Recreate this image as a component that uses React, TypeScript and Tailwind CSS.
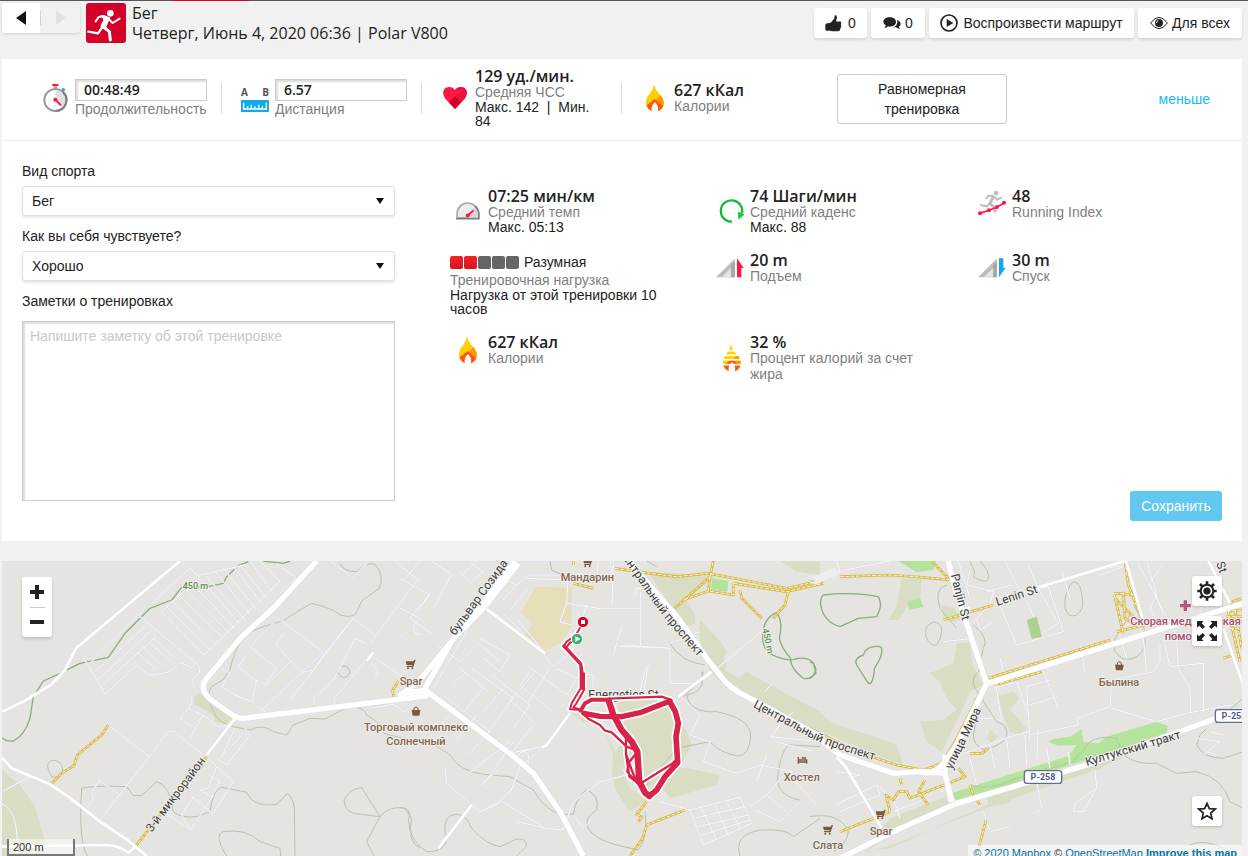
import type { ReactNode } from 'react'

type IconProps = { className?: string }

function RunnerLogo() {
  return (
    <svg viewBox="0 0 120 120" className="size-10 shrink-0 rounded-[3px] bg-[#d30029]" aria-hidden="true">
      <circle cx="73" cy="31" r="10" fill="#fff" />
      <path d="M44 36L60 38L73 44L66 60L60 74L48 78L43 70L52 50Z" fill="#fff" />
      <g fill="none" stroke="#fff" strokeLinecap="round" strokeLinejoin="round">
        <path d="M54 39L38 42L29 55" strokeWidth="6" />
        <path d="M66 46L80 60L101 47" strokeWidth="6" />
        <path d="M53 72L70 86L73 111" strokeWidth="9" />
        <path d="M48 74L36 91L7 86" strokeWidth="7" />
      </g>
    </svg>
  )
}

function ThumbIcon({ className }: IconProps) {
  return (
    <svg viewBox="0 0 54 54" className={className} fill="currentColor" aria-hidden="true">
      <path d="M18 25L29 12L31 1Q38 -1 38 8L35 21H49Q54 24 50 29Q54 33 50 37Q52 42 48 44Q49 51 42 52H22L14 49Q1 52 1 45V32Q1 26 8 26Z" />
    </svg>
  )
}

function CommentsIcon({ className }: IconProps) {
  return (
    <svg viewBox="0 0 54 36" className={className} fill="currentColor" aria-hidden="true">
      <path d="M20 1C31 1 39 7 39 15C39 23 31 29 20 29L15 28Q11 33 4 33Q8 29 8 25Q1 21 1 15C1 7 9 1 20 1Z" />
      <path d="M42 8Q53 13 53 21Q53 26 48 29Q48 33 52 35Q44 36 39 31L30 31Q43 27 43 15Q43 11 42 8Z" />
    </svg>
  )
}

function StopwatchIcon() {
  return (
    <svg viewBox="0 0 78 90" className="h-[30px] w-[26px]" aria-hidden="true">
      <circle cx="40" cy="51" r="33" fill="#fff" stroke="#9c9c9c" strokeWidth="6" />
      <path d="M40 51V21A30 30 0 0 1 61 72Z" fill="#e1e1e1" />
      <path d="M63 27A33 33 0 0 1 40 84" fill="none" stroke="#7d7d7d" strokeWidth="6" />
      <rect x="31" y="3" width="18" height="6" fill="#ff1744" />
      <rect x="35" y="9" width="10" height="7" fill="#a8a8a8" />
      <circle cx="64" cy="20" r="5" fill="#14a9e8" />
      <circle cx="40" cy="50" r="6" fill="#ff1744" />
      <path d="M40 50L57 67" stroke="#ff1744" strokeWidth="6" />
    </svg>
  )
}

function DistanceIcon() {
  return (
    <div className="flex w-7 flex-col">
      <div className="flex justify-between font-['Open_Sans',sans-serif] text-[10px] leading-4 font-bold text-[#555]">
        <span>A</span>
        <span>B</span>
      </div>
      <svg viewBox="0 0 84 36" className="h-3 w-7" aria-hidden="true">
        <rect width="84" height="36" rx="2" fill="#14a9e8" />
        <path d="M8 8V27H76V8M20 26V19M31 26V14M42 26V19M53 26V14M64 26V19" fill="none" stroke="#fff" strokeWidth="4" />
      </svg>
    </div>
  )
}

function HeartIcon() {
  return (
    <svg viewBox="0 0 72 72" className="size-6" aria-hidden="true">
      <path d="M36 69L7 38C-6 20 2 4 18 3Q30 3 36 13Q42 3 54 3C70 4 78 20 65 38Z" fill="#ff1744" />
      <path d="M36 13Q42 3 54 3C70 4 78 20 65 38L54 50L36 31L56 13Z" fill="#e5173c" />
      <path d="M17 49L36 31L54 50L36 69Z" fill="#cf0025" />
    </svg>
  )
}

function FlameIcon({ striped = false }: { striped?: boolean }) {
  return (
    <svg viewBox="0 0 60 86" className="h-7 w-5" aria-hidden="true">
      <path d="M27 1Q31 19 46 34C63 52 60 72 40 84Q46 68 30 54Q15 68 20 84C-3 72 -2 50 12 32Q25 16 27 1Z" fill="#ffd000" />
      <path d="M46 34C63 52 60 72 40 84Q46 68 30 54L22 60Z" fill="#ff9a00" />
      <path d="M4 66L29 46L55 68Q50 79 39 84Q43 67 30 55Q16 67 20 84Q8 78 4 66Z" fill="#ff5412" />
      {striped && (
        <g fill="#fff">
          <rect y="18" width="60" height="5" />
          <rect y="32" width="60" height="5" />
          <rect y="46" width="60" height="5" />
          <rect y="61" width="60" height="5" />
        </g>
      )}
    </svg>
  )
}

function PaceIcon() {
  return (
    <svg viewBox="0 0 78 56" className="h-[18px] w-[26px]" aria-hidden="true">
      <path d="M5 49V36A33 33 0 0 1 71 36V49Z" fill="#ececec" stroke="#a6a6a6" strokeWidth="5" />
      <path d="M38 42L61 14Q73 25 71 49H38Z" fill="#d6d6d6" />
      <path d="M61 13Q73 24 73 36V52H2" fill="none" stroke="#7d7d7d" strokeWidth="5" />
      <circle cx="38" cy="42" r="6" fill="#ff1744" />
      <path d="M38 42L56 26" stroke="#ff1744" strokeWidth="6" />
    </svg>
  )
}

function CadenceIcon() {
  return (
    <svg viewBox="0 0 80 78" className="size-[26px]" aria-hidden="true">
      <path d="M40 72A33 33 0 1 1 71 45" fill="none" stroke="#12bd35" strokeWidth="7" />
      <path d="M58 41L79 49L60 66Z" fill="#19c541" />
    </svg>
  )
}

function RunningIndexIcon() {
  return (
    <svg viewBox="0 0 84 78" className="h-[26px] w-7" aria-hidden="true">
      <circle cx="54" cy="9" r="7" fill="#bdbdbd" />
      <g fill="none" stroke="#bdbdbd" strokeWidth="6">
        <path d="M47 18L36 41L50 53L52 67" strokeWidth="9" />
        <path d="M47 17L31 17L23 27M49 20L58 29L71 22M37 38L27 49L6 45" />
      </g>
      <path d="M5 70L33 61L56 52L80 38" fill="none" stroke="#ff1744" strokeWidth="5" />
      <g fill="#ff1744">
        <circle cx="6" cy="70" r="6" />
        <circle cx="33" cy="61" r="6" />
        <circle cx="57" cy="51" r="6" />
        <circle cx="78" cy="38" r="6" />
      </g>
    </svg>
  )
}

function SlopeIcon({ down = false }: { down?: boolean }) {
  return (
    <svg viewBox="0 0 84 60" className="h-5 w-7" aria-hidden="true">
      <path d="M0 58L56 2V58Z" fill="#bdbdbd" />
      <path d="M17 58L46 29V58Z" fill="#e4e4e4" />
      <path d="M45 22L57 10V58H45Z" fill="#a8a8a8" />
      {down ? <path d="M63 1H76V29H83L63 58Z" fill="#14a9e8" /> : <path d="M63 1L83 30H76V58H63Z" fill="#ff1744" />}
    </svg>
  )
}

function PlayIcon({ className }: IconProps) {
  return (
    <svg viewBox="0 0 54 54" className={className} aria-hidden="true">
      <circle cx="27" cy="27" r="24" fill="none" stroke="currentColor" strokeWidth="5" />
      <path d="M20 15L40 27L20 39Z" fill="currentColor" />
    </svg>
  )
}

function EyeIcon({ className }: IconProps) {
  return (
    <svg viewBox="0 0 54 40" className={className} aria-hidden="true">
      <path d="M2 20Q14 3 27 3Q40 3 52 20Q40 37 27 37Q14 37 2 20Z" fill="none" stroke="currentColor" strokeWidth="3" />
      <circle cx="27" cy="20" r="12" fill="currentColor" />
      <path d="M25 13Q19 14 19 20" fill="none" stroke="#fff" strokeWidth="3" />
    </svg>
  )
}

function GearIcon() {
  return (
    <svg viewBox="0 0 60 60" className="size-5" fill="none" stroke="currentColor" aria-hidden="true">
      <circle cx="30" cy="30" r="19" strokeWidth="6" />
      <circle cx="30" cy="30" r="10" fill="currentColor" strokeWidth="2" />
      <path d="M30 1V11M30 49V59M1 30H11M49 30H59M9 9L17 17M43 43L51 51M51 9L43 17M17 43L9 51" strokeWidth="8" />
    </svg>
  )
}

function ExpandIcon() {
  return (
    <svg viewBox="0 0 60 60" className="size-5" fill="currentColor" aria-hidden="true">
      <path d="M0 0H20L14 6L24 17L17 24L6 14L0 20Z" />
      <path d="M60 0V20L54 14L43 24L36 17L46 6L40 0Z" />
      <path d="M0 60V40L6 46L17 36L24 43L14 54L20 60Z" />
      <path d="M60 60H40L46 54L36 43L43 36L54 46L60 40Z" />
    </svg>
  )
}

function StarIcon() {
  return (
    <svg viewBox="0 0 60 60" className="size-5" fill="none" stroke="currentColor" strokeWidth="5" aria-hidden="true">
      <path d="M30 7L37 23L55 24L41 36L45 53L30 44L15 53L19 36L5 24L23 23Z" />
    </svg>
  )
}

type StatProps = {
  icon: ReactNode
  iconClass?: string
  value: string
  label: string
  extra?: string
}

function Stat({ icon, iconClass = 'pt-2', value, label, extra }: StatProps) {
  return (
    <div className="flex">
      <div className={`flex w-[38px] shrink-0 justify-center self-start pr-0.5 ${iconClass}`}>{icon}</div>
      <div className="min-w-0">
        <p className="font-['Open_Sans',sans-serif] text-base leading-4 font-semibold">{value}</p>
        <p className="leading-4 text-[#808080]">{label}</p>
        {extra && <p className="leading-[14px]">{extra}</p>}
      </div>
    </div>
  )
}

function Field({ id, label, options }: { id: string; label: string; options: string[] }) {
  return (
    <div className="mb-[10px]">
      <label htmlFor={id} className="mb-[5px] block leading-5">{label}</label>
      <div className="relative">
        <select
          id={id}
          className="block h-[30px] w-full appearance-none rounded-[3px] border border-[#e0e0e0] bg-white pl-[9px] shadow-[0_2px_3px_rgba(0,0,0,0.1)]"
        >
          {options.map((option) => (
            <option key={option}>{option}</option>
          ))}
        </select>
        <svg viewBox="0 0 8 6" className="pointer-events-none absolute top-3 right-[11px] h-1.5 w-2" aria-hidden="true">
          <path d="M0 0H8L4 6Z" fill="#111" />
        </svg>
      </div>
    </div>
  )
}

type Tile = {
  x: number
  green: string
  bright: string
  contour: string
  contourStrong: string
  minor: string
  mid: string
  major: string
  track: string
}

const tiles: Tile[] = [
  {
    x: 0,
    green: 'M6 645L60 690 105 755 135 860 130 903H6ZM583 425L600 415 655 450 700 490 680 505 645 500 640 480 600 455 583 450Z',
    bright: '',
    contour:
      'M1020 25Q1030 50 1070 50Q1100 20 1125 28Q1155 60 1138 100L1085 138 1068 175Q1055 190 1020 180Q1000 160 935 145L900 165 850 197 790 215 735 237Q700 290 690 345L668 375 635 395Q615 420 640 470Q655 505 700 515L750 525Q790 505 820 530L860 540 880 510 930 490 975 492 1040 458Q1090 450 1100 480L1130 500 1152 535 1200 548M1015 350A17 17 0 1 1 1049 350A17 17 0 1 1 1015 350M155 665Q130 625 155 616Q190 615 188 650Q175 672 155 665M262 903Q235 860 245 700Q290 690 380 695L400 722H425L470 680Q510 690 520 770Q540 790 590 785L630 770Q640 700 665 697L740 712Q760 760 830 748L862 715Q880 730 883 760L885 903M1140 785L1085 778Q1035 780 1032 735Q1050 700 1085 698L1140 785Q1170 750 1215 760L1235 790Q1220 860 1260 880M1140 785L1100 860 1122 903M680 903Q640 840 670 830Q740 820 780 860L840 880 842 903',
    contourStrong: 'M870 18L850 25 790 18M745 20L715 32 680 65 670 85 625 95 545 97 515 135 450 160 375 235 325 307 240 325 180 355 130 378 100 425 90 490Q75 540 40 558Q20 560 6 548',
    minor:
      'M485 170L612 300M500 155L632 285M515 138L648 268M535 118L668 248M555 100L688 235M572 80L705 222M592 60L722 210M615 60L735 195M645 50L752 178M670 40L768 162M698 32L785 145M720 30L800 130M750 18L820 115M780 18L838 78M455 145L570 40 600 68M600 60L735 30M485 170L600 65M612 300L840 78M830 25L888 70 840 115M405 172L600 335 598 352 578 375 582 398M270 325L435 160M285 350L440 210M297 372L455 225M305 392L470 243M316 418L410 330 450 362 510 350 540 322 575 338 585 325M250 308L316 418M430 275L495 340M445 260L520 325M460 250L520 305M410 290L470 345M990 18L1060 68 1100 25M1185 18L1260 80M1260 65L1110 265M1060 190L1127 242M1060 190L870 435M835 190L970 292 905 352 780 470M835 190L790 235 750 275 830 340 795 390 770 375 755 440M850 235L828 270 872 318 905 352 942 345 975 292 1060 190M740 300L715 335 770 380M665 340L690 355 665 395 705 420 755 440 795 470M870 320L795 395M1100 265L1065 250 1040 300 1000 375 942 430V450M1110 300L1215 370M1110 320L1135 350 1125 370M1003 445V430L1110 300M1245 210L1240 230 1260 240M1100 450L1215 430M1110 460L1180 448 1215 472 1260 430M325 510L448 605 300 795M448 605L500 535Q515 520 530 537L605 595M575 420Q580 440 565 460L540 490 575 515 610 482 570 548M565 460L610 482 655 515 685 510M705 520L665 605M735 520L750 540 680 630 655 615 735 530M620 605L650 635 625 700 600 705M650 635L700 680 630 790M625 660L660 680 635 725 600 705M580 725L545 780 572 825 640 720M575 725L635 775M300 675L275 710 280 735 260 755M295 675L360 720M10 708L90 665M6 747Q60 770 50 900M505 780L572 825',
    mid: 'M6 470L70 440 155 388 195 345 228 280 540 18M6 608L35 640 150 688 205 725 300 800 380 853 440 903M6 875L320 870Q360 872 385 893L408 872M705 490L620 600M1100 318L1120 292',
    major: 'M950 18L820 160 725 245 625 365Q600 390 615 415Q625 430 640 440L690 475Q710 490 730 490L1100 445 1285 422',
    track: 'M153 688L185 655 222 632 232 600 305 540 325 510M620 605L408 872M555 705V670M1195 378L1178 405 1182 440',
  },
  {
    x: 1200,
    green:
      'M745 50Q850 55 945 65L860 135 820 165ZM860 135L885 180V205L860 215 820 165ZM900 195L930 225 965 265 980 290 970 310 980 330 975 345 1015 368 1040 350 1110 390 1260 470V545L1100 450 980 400 930 350 895 235ZM1140 18H1260V60L1190 50ZM510 470L600 500 640 580 690 700 740 735 690 770 650 710 635 650 640 600 680 540 650 440 800 430 860 530 875 570 840 635 960 660 950 690 810 730 780 690 740 735 640 600 610 515 550 500Z',
    bright: 'M937 70L985 78 982 110 932 105ZM105 320L155 250 160 258 110 322Z',
    contour:
      'M450 18L455 45 510 70M740 18L770 35M905 350Q920 410 860 420Q870 475 950 470Q1050 490 1052 540Q1050 600 1015 603Q960 595 930 560L830 580 740 690M810 265Q840 320 915 330M910 350L905 375 850 425M0 548L90 560 150 600Q180 650 250 658L330 665 400 705Q430 760 480 778L520 778Q530 720 560 705Q600 720 590 765Q550 790 565 820Q580 850 650 870L715 885Q745 850 735 770M0 757Q40 760 25 795Q30 860 80 890Q120 895 140 860Q120 780 170 778Q200 780 215 820Q260 870 300 875L350 852Q385 850 378 875L350 903M1020 903Q1000 840 1080 825Q1160 820 1180 845L1260 790M1200 735Q1120 720 1135 650Q1150 560 1180 570L1260 575',
    contourStrong: 'M1130 172Q1090 190 1088 240Q1085 290 1130 305Q1170 320 1185 312Q1240 300 1248 345Q1240 375 1210 370Q1170 340 1172 310M1130 172Q1150 200 1138 250Q1145 280 1172 310',
    minor:
      'M60 18L0 90M95 18L155 58 100 160M175 45L210 85 250 50 205 18M230 18L185 60M0 70L90 120 55 165M95 110L30 190 100 240M0 160L60 190 0 250M110 270L180 320 235 265 300 320M205 190L155 250M240 160L100 400M300 145L350 90 385 60H480M380 70L495 75M505 55L500 145 595 160M595 160H722M500 145L480 200 515 210M350 90L290 60M385 100L330 165M375 240L315 180M435 295L350 190M530 55L590 60 595 18M560 150L515 290 460 335 430 295M380 330L500 420 560 320M390 350L360 390 470 480M450 340L385 440M470 340L530 370M415 340L330 435 400 500M240 250L330 300 300 350 250 310M275 360L390 450 340 520M215 340L340 430 250 550M180 340L265 410M130 420L270 530 205 600M155 390L200 350M185 440L120 510M230 480L170 555M250 400L200 460M310 400L250 470M330 560L205 655M400 510L330 600M340 560L250 690M365 620L330 715M300 640L240 690M640 300L665 215M665 270L810 280V385H880M722 110V275M705 125L710 100 740 100M640 18L636 150M660 275L800 278M730 420L745 330M810 265L900 230M1110 545L1260 560M1150 500L1115 540 1125 560 1240 590M1070 680L1100 600M1050 755L1100 720 1160 650 1250 750M1065 765L1140 800 1200 740M1100 720L1160 770M780 740L870 765 1020 727 1055 805 910 870 870 765M880 790L1035 755M895 815L1045 780M905 840L1050 795M905 760L950 855M945 750L985 840M980 740L1020 820M135 640L140 685 240 770 290 750 350 685 400 710M240 770L300 740M350 800L440 820 490 825 520 740 600 680 680 660M300 735L435 820M520 780L550 820 580 790M720 410L740 330M630 18L640 70M550 355L580 360 578 400M840 425L900 480 870 540 930 560 910 620 1010 655 1080 630 1180 650M940 350L1120 200M1095 410L1120 380M1130 520L1180 470M330 595L425 575M440 570L360 592M386 606A16 16 0 1 0 354 606A16 16 0 1 0 386 606M425 580L385 615V635',
    mid: 'M250 155L435 295M510 475L440 570 425 578M115 880L215 750M835 425L935 350',
    major: 'M345 18L245 150 55 380 -5 425M355 25L250 160 160 250 75 400M10 415L85 405M75 405L335 600 400 655 480 770 550 903M685 18L835 190 920 310 960 360Q985 400 1050 430L1270 550',
    track:
      'M645 40L750 55 830 65 925 55 1160 100 1270 75M1000 85L1160 110 1270 85M930 65L940 18M930 65L825 160M930 65L925 108 1000 120V85M925 108L850 135M1020 105L1025 130 1085 190M1165 110L1155 150 1120 190M520 85L580 100M520 18V30M740 740L710 778 725 785 715 800M855 765L740 810 728 850 690 903',
  },
  {
    x: 2430,
    green:
      'M275 70H335L330 130 290 160 265 195H235L260 155ZM395 150L435 160 455 195 425 200 400 190ZM440 265L480 262 488 330 520 390 480 410 440 500 395 590 350 560 330 500 400 495 440 465 410 430 390 380 360 355 430 325ZM565 422L610 410 628 430 600 465 650 520 630 538 600 530 580 480ZM540 525L565 545 545 565 530 548ZM0 455L80 510 180 540 260 570 280 630 200 600 0 515ZM215 820L240 790 405 725 420 755 250 830 170 890 240 880 620 710 600 745 535 755 530 710 780 645 930 590 935 610 870 640 540 755 300 850 170 895Z',
    bright: 'M265 18H378L370 45 320 52ZM292 140L330 128 340 155 298 165ZM425 715L610 655 775 603 800 570 745 572 714 560 730 552 780 545 815 522 820 560 865 565 890 545 1040 500 1073 512 1070 535 820 618 440 740Z',
    contour:
      'M480 18Q500 55 490 65Q530 90 535 70Q540 50 510 18M790 80Q760 110 765 160Q775 190 800 180Q820 165 818 140Q815 80 790 80M370 202Q340 210 348 245Q360 275 380 270Q400 240 393 215Q385 200 370 202M410 90Q370 100 390 160L440 220M490 210Q540 250 520 280L505 350Q480 370 495 400L560 500Q600 510 588 550Q560 580 520 583Q490 570 490 540L500 490 495 430M970 150Q1010 200 1005 270Q990 320 940 312Q900 290 915 250L960 180M480 690Q540 710 620 670L790 620 840 560Q870 540 920 550L940 600Q980 630 1040 625L1100 655 1160 650Q1240 670 1260 740L1300 760M1300 590L1240 610Q1180 610 1160 570L1170 540 1190 520M0 785Q90 770 115 830Q110 870 70 890M1140 870Q1180 850 1240 880M1300 430L1240 480',
    contourStrong: 'M40 120Q130 110 205 125Q220 150 200 185L145 190 90 215Q40 200 32 150Q30 130 40 120M210 275Q170 270 160 300Q130 310 140 330L175 385Q190 390 193 340Q220 300 215 280ZM0 320L10 325 18 355 0 370',
    minor:
      'M0 70L130 40 240 18M80 18L90 50 60 85M430 50L460 160M445 18L480 130M480 45L470 90 550 110 540 150 500 190 510 225 550 200M530 110L610 90M585 18L640 130M655 30L690 110 745 205 680 245M715 95L760 230 620 270 560 130 715 95M650 140L700 250M755 45L780 130M885 40L950 30M870 60L940 35M980 18L1100 240M1010 18L1040 120 1020 160 1070 250M1035 115L1060 180M1060 30L1020 80M1050 270V320L1030 350 905 375 900 455 800 490 805 510 660 540M1100 250L1105 340 1140 400 1143 495M1060 250L1080 335 1180 325V470M1170 120L1180 260M930 250L950 310M1000 250L1010 350M905 460L1040 500 1130 475 1260 450M810 270L825 350M700 350L745 460M650 395L720 375M650 395L660 560M570 310L580 350 700 350M555 370L575 500M550 400L620 380M660 450L740 425M620 380L655 480M480 610L500 690M450 600L600 545 660 530M540 570L555 640M590 550L600 640M645 540L650 630M685 525L680 610M640 360L700 320M710 580L720 640M775 590L780 630M855 645L860 700 795 745 790 770 820 770 860 700M680 680L695 760 675 775M520 770L540 830 600 815M500 430L480 510 460 560M400 260L490 250M470 490H550M80 650L150 660 110 670M75 750L200 690 210 720 90 770M200 690L250 730 270 790M250 770L350 730M360 720L375 700 400 710M310 740L320 710M1160 550L1230 560 1180 600M1200 530L1240 540M1190 590L1220 600',
    mid: 'M660 105L945 18M948 18L1000 200M455 165L480 160M80 605L110 640 215 820M1195 18L1260 145M1240 220L1300 390',
    major: 'M415 18L435 100 530 385M535 385L1300 145M530 385L440 570 405 620Q370 665 330 650M0 530L90 600 250 655 330 650 410 655M405 600V655L425 740M70 920L250 830 440 745 830 630 1220 490 1310 470',
    track:
      'M0 80L20 85M90 65L240 60Q330 65 420 75L365 18M945 18L955 90 1000 205M400 195L550 150M913 120L940 235M913 115H930L970 120M940 110L945 190 985 215M915 130L1000 215M920 230L1005 210M535 370L900 255M555 390L695 350M525 385L435 560 395 625 340 645 260 630 140 590 0 520M480 595L515 595 535 580M445 640L465 665 300 730 290 710 265 710 250 735 228 720 235 750 240 770M480 690L490 720 510 750M270 670L275 690M345 675L325 710 355 750M90 830L240 770M528 795L500 903M1240 310L1270 300M1255 145L1295 130M1250 170L1295 165M1250 185H1295M1255 200H1295M1260 220H1290M1255 170L1290 320M1275 165L1295 280',
  },
]

const layers: { key: keyof Omit<Tile, 'x'>; fill?: string; strokes: [string, number, string?][] }[] = [
  { key: 'green', fill: '#d9ddc3', strokes: [] },
  { key: 'bright', fill: '#b4e49c', strokes: [] },
  { key: 'contour', strokes: [['#b5c5ab', 3]] },
  { key: 'contourStrong', strokes: [['#8aae7d', 4]] },
  { key: 'minor', strokes: [['#d9dce8', 5], ['#f8f8fb', 3]] },
  { key: 'track', strokes: [['#d6b83d', 8], ['#fbf5d5', 3, '12 4']] },
  { key: 'mid', strokes: [['#dfe0e8', 10], ['#fff', 8]] },
  { key: 'major', strokes: [['#dcdde6', 19], ['#fff', 16]] },
]

// Single laps are thin, stretches that were run several times are wide.
const laps: { d: string; width: number }[] = [
  { width: 6, d: 'M100 65L78 105 50 125 40 140M80 115L58 130 48 145M92 192V265L65 310 60 328 95 330M102 220V270L78 312 70 322 95 330' },
  { width: 10, d: 'M42 138L92 192 97 225V265' },
  { width: 7, d: 'M178 296L335 290 365 300M380 478L365 492 275 548M98 340L115 356 150 375 165 392 185 397 230 440 262 452M228 410V462L238 530 265 550M228 462L245 510 262 550M262 455L235 490 232 515 262 550' },
  { width: 12, d: 'M92 332L105 310 125 299H178' },
  { width: 19, d: 'M176 302L190 345 215 390 245 425 262 455 268 545 285 578 298 588' },
  { width: 16, d: 'M102 340L150 349 215 350 270 338 355 305' },
  { width: 17, d: 'M358 303L376 335 385 370 378 410 383 488 345 530 320 570 298 588' },
]

const places = [
  { x: 1762, y: 79, text: 'Мандарин' },
  { x: 1233, y: 389, text: 'Spar' },
  { x: 1248, y: 527, text: 'Торговый комплекс' },
  { x: 1248, y: 571, text: 'Солнечный' },
  { x: 2405, y: 679, text: 'Хостел' },
  { x: 3357, y: 393, text: 'Былина' },
  { x: 2643, y: 840, text: 'Spar' },
  { x: 2484, y: 882, text: 'Слата' },
]

const streets = [
  { id: 'sozidateley', d: 'M1365 243L1550 -10L1700 -210', text: 'бульвар Созидателей' },
  { id: 'central-north', d: 'M1868 10L1990 185L2150 370', text: 'ентральный проспект' },
  { id: 'central-south', d: 'M2258 455L2435 550Q2500 585 2720 641', text: 'Центральный проспект' },
  { id: 'mikrorayon', d: 'M455 833L650 575', text: '3-й микрорайон' },
  { id: 'mira', d: 'M2856 645L2951 450', text: 'улица Мира' },
  { id: 'panjin', d: 'M2852 60L2895 230', text: 'Panjin St' },
  { id: 'lenin', d: 'M2992 153L3130 108', text: 'Lenin St' },
  { id: 'kultuk', d: 'M3260 633L3565 543', text: 'Култукский тракт' },
  { id: 'st', d: 'M3648 25L3668 80', text: 'St' },
  { id: 'energetics', d: 'M1765 432L2000 432', text: 'Energetics St' },
]

function CartGlyph({ x, y }: { x: number; y: number }) {
  return (
    <g transform={`translate(${x} ${y})`} fill="#79583f">
      <path d="M-13 -9H10L13 -14H17L10 8H-9L-10 4H7V2H-10Z" />
      <circle cx="-6" cy="12" r="3" />
      <circle cx="7" cy="12" r="3" />
    </g>
  )
}

function BagGlyph({ x, y }: { x: number; y: number }) {
  return (
    <g transform={`translate(${x} ${y})`}>
      <path d="M-13 -3H13L10 14H-10Z" fill="#79583f" />
      <path d="M-7 -2Q-6 -12 0 -12Q6 -12 7 -2" fill="none" stroke="#79583f" strokeWidth="3" />
    </g>
  )
}

function Shield({ x, y }: { x: number; y: number }) {
  return (
    <g transform={`translate(${x} ${y})`}>
      <rect x="-56" y="-19" width="112" height="38" rx="8" fill="#fff" stroke="#656b99" strokeWidth="4" />
      <text y="10" textAnchor="middle" fontSize="27" fontWeight="700" fill="#555b8d">Р-258</text>
    </g>
  )
}

// Map units are three to a pixel.
function RouteMap() {
  return (
    <svg
      viewBox="6 18 3720 885"
      preserveAspectRatio="xMinYMin slice"
      className="absolute inset-0 h-full w-full font-[Roboto,sans-serif]"
      role="img"
      aria-label="Карта маршрута"
    >
      <rect width="3800" height="1000" fill="#e5e4e0" />
      <path d="M1608 95L1716 98 1713 220 1680 265 1635 287 1575 240 1597 208 1563 172Z" fill="#e6deb8" />
      {layers.map(({ key, fill, strokes }) => (
        <g key={key} strokeLinejoin="round">
          {fill && tiles.map((tile) => <path key={tile.x} d={tile[key]} transform={`translate(${tile.x} 0)`} fill={fill} />)}
          {strokes.map(([color, width, dash]) =>
            tiles.map((tile) => (
              <path
                key={color + tile.x}
                d={tile[key]}
                transform={`translate(${tile.x} 0)`}
                fill="none"
                stroke={color}
                strokeWidth={width}
                strokeDasharray={dash}
              />
            )),
          )}
        </g>
      ))}
      <path d="M3080 195L3110 185 3126 245 3095 252Z" fill="#acd190" />
      <path d="M2440 65L2505 37 2515 58 2450 88ZM2430 85L2460 72 2455 90Z" fill="#eeeeef" />

      <g stroke="#f0efec" strokeWidth="6" strokeLinejoin="round" paintOrder="stroke">
        <g fill="#3d3d3d" fontSize="36">
          {streets.map((street) => (
            <g key={street.id}>
              <path id={street.id} d={street.d} fill="none" stroke="none" />
              <text>
                <textPath href={`#${street.id}`}>{street.text}</textPath>
              </text>
            </g>
          ))}
        </g>
        <g fill="#83674f" fontSize="33" fontWeight="500" textAnchor="middle">
          {places.map((place) => (
            <text key={place.text + place.x} x={place.x} y={place.y}>{place.text}</text>
          ))}
        </g>
        <g fill="#a94f73" fontSize="33" fontWeight="500">
          <text x="3391" y="211">Скорая медицинская</text>
          <text x="3494" y="255">помощь</text>
        </g>
        <g fill="#5d8f50" fontSize="27" fontWeight="500">
          <text x="548" y="103">450 m</text>
          <text transform="translate(2287 222) rotate(78)">450 m</text>
        </g>
      </g>

      <path d="M3551 136H3561V147H3572V157H3561V168H3551V157H3540V147H3551Z" fill="#b2577c" />
      <CartGlyph x={1230} y={328} />
      <CartGlyph x={1762} y={22} />
      <CartGlyph x={2640} y={778} />
      <CartGlyph x={2482} y={824} />
      <BagGlyph x={1248} y={468} />
      <BagGlyph x={3358} y={332} />
      <path d="M2395 606V626M2395 621H2420V626M2395 615H2420V621M2405 609H2418" fill="none" stroke="#79583f" strokeWidth="4" />
      <Shield x={3129} y={666} />
      <Shield x={3702} y={483} />

      <g transform="translate(1650 135)" fill="none" strokeLinejoin="round" strokeLinecap="round">
        {laps.map((lap) => (
          <path key={lap.d} d={lap.d} stroke="#fff" strokeWidth={lap.width + 10} />
        ))}
        {laps.map((lap) => (
          <path key={lap.d} d={lap.d} stroke="#d82449" strokeWidth={lap.width} />
        ))}
      </g>
      <circle cx="1731" cy="252" r="17" fill="#35b56a" stroke="#fff" strokeWidth="3" />
      <path d="M1726 243L1741 252 1726 261Z" fill="#fff" />
      <circle cx="1749" cy="201" r="17" fill="#d30029" stroke="#fff" strokeWidth="3" />
      <rect x="1743" y="195" width="12" height="12" fill="#fff" />
    </svg>
  )
}

const toolbarButton = 'flex h-[30px] items-center justify-center rounded-[3px] bg-white shadow-[0_2px_3px_rgba(0,0,0,0.12)]'
const mapButton = 'flex size-[30px] items-center justify-center rounded-[3px] bg-white text-[#222] shadow-[0_1px_3px_rgba(0,0,0,0.2)]'
const summaryInput =
  "block h-[22px] w-full border border-[#ccc] bg-white pl-2 font-['Open_Sans',sans-serif] text-sm font-semibold text-[#222] shadow-[inset_2px_2px_2px_rgba(0,0,0,0.14)]"

export default function App() {
  return (
    <div className="flex min-h-screen flex-col bg-[#f1f1f1] pr-1.5 pl-0.5 font-['Liberation_Sans',Arial,sans-serif] text-sm text-[#222]">
      <div className="-mr-1.5 -ml-0.5 h-px bg-[#59565a]">
        <div className="ml-[172px] h-px w-[77px] bg-[#d30029]" />
      </div>
      <header className="flex h-[58px] items-start pt-0.5">
        <div className="mr-[6px] flex h-[30px] w-[78px] items-center rounded-[3px] shadow-[0_1px_3px_rgba(0,0,0,0.15)]">
          <button type="button" aria-label="Предыдущая тренировка" className="flex h-full w-[38px] items-center justify-center rounded-l-[3px] bg-white">
            <svg viewBox="0 0 10 14" className="h-3.5 w-2.5"><path d="M10 0V14L0 7Z" fill="#111" /></svg>
          </button>
          <button type="button" disabled aria-label="Следующая тренировка" className="flex h-full w-10 items-center">
            <span className="mr-[15px] h-3.5 w-px bg-[#d2d2d2]" />
            <svg viewBox="0 0 10 14" className="h-3.5 w-2.5"><path d="M0 0V14L10 7Z" fill="#e0e1e4" /></svg>
          </button>
        </div>
        <RunnerLogo />
        <div className="ml-[6px] font-['Open_Sans',sans-serif] text-base leading-5">
          <h1>Бег</h1>
          <p>Четверг, Июнь 4, 2020 06:36 | Polar V800</p>
        </div>
        <div className="mt-[5px] ml-auto flex gap-1">
          <button type="button" className={`${toolbarButton} w-[53px] gap-1.5`}>
            <ThumbIcon className="size-[17px]" />0
          </button>
          <button type="button" className={`${toolbarButton} w-[54px] gap-1`}>
            <CommentsIcon className="h-3 w-[18px]" />0
          </button>
          <button type="button" className={`${toolbarButton} w-[205px] gap-[5px]`}>
            <PlayIcon className="size-[18px]" />Воспроизвести маршрут
          </button>
          <button type="button" className={`${toolbarButton} w-[104px] gap-1`}>
            <EyeIcon className="h-3.5 w-[18px]" />Для всех
          </button>
        </div>
      </header>

      <main className="flex flex-1 flex-col">
        <form className="bg-white" onSubmit={(e) => e.preventDefault()}>
          <div className="flex h-[82px] items-center border-b border-[#eee] pb-0.5 pl-5">
            <div className="flex h-[30px] w-[200px] items-center border-r border-[#ddd]">
              <div className="flex w-[53px] shrink-0 justify-end pr-[7px] pb-0.5"><StopwatchIcon /></div>
              <div className="w-[132px] pb-0.5">
                <input id="duration" defaultValue="00:48:49" className={summaryInput} />
                <label htmlFor="duration" className="block leading-4 text-[#808080]">Продолжительность</label>
              </div>
            </div>
            <div className="flex h-[30px] w-[200px] items-center border-r border-[#ddd]">
              <div className="flex w-[53px] shrink-0 justify-end pr-[6px] pb-0.5"><DistanceIcon /></div>
              <div className="w-[132px] pb-0.5">
                <input id="distance" defaultValue="6.57" className={summaryInput} />
                <label htmlFor="distance" className="block leading-4 text-[#808080]">Дистанция</label>
              </div>
            </div>
            <div className="flex h-[30px] w-[200px] items-center border-r border-[#ddd]">
              <div className="flex w-[53px] shrink-0 justify-end pr-2 pb-0.5"><HeartIcon /></div>
              <div className="w-[122px] pb-0.5">
                <p className="font-['Open_Sans',sans-serif] text-base leading-4 font-semibold">129 уд./мин.</p>
                <p className="leading-4 text-[#808080]">Средняя ЧСС</p>
                <p className="leading-[14px]">Макс. 142 &nbsp;|&nbsp; Мин. 84</p>
              </div>
            </div>
            <div className="flex w-[200px] items-center pb-0.5">
              <div className="flex w-[52px] shrink-0 justify-end pr-[9px]"><FlameIcon /></div>
              <div>
                <p className="font-['Open_Sans',sans-serif] text-base leading-4 font-semibold">627 кКал</p>
                <p className="leading-4 text-[#808080]">Калории</p>
              </div>
            </div>
            <button type="button" className="ml-[15px] h-[50px] w-[170px] rounded-[3px] border border-[#ccc] px-8 leading-5">
              Равномерная тренировка
            </button>
            <a href="#less" className="mr-8 ml-auto text-[#22b9f2]">меньше</a>
          </div>

          <div className="flex p-5 pb-10">
            <div className="w-[373px] shrink-0">
              <Field id="sport" label="Вид спорта" options={['Бег', 'Велоспорт', 'Ходьба']} />
              <Field id="feeling" label="Как вы себя чувствуете?" options={['Хорошо', 'Отлично', 'Плохо']} />
              <label htmlFor="notes" className="block leading-5">Заметки о тренировках</label>
              <textarea
                id="notes"
                placeholder="Напишите заметку об этой тренировке"
                className="mt-[10px] block h-[180px] w-full resize-none border border-[#ccc] px-[7px] py-1 shadow-[inset_2px_2px_2px_rgba(0,0,0,0.14)] placeholder:text-[#c8c8c8]"
              />
            </div>

            <div className="ml-[55px] flex flex-1 flex-col justify-between">
              <div className="mt-[27px] grid grid-cols-[repeat(3,222px)] grid-rows-[64px_82px_auto] gap-x-10">
                <Stat icon={<PaceIcon />} iconClass="pt-[14px]" value="07:25 мин/км" label="Средний темп" extra="Макс. 05:13" />
                <Stat icon={<CadenceIcon />} iconClass="pt-[10px] pl-1" value="74 Шаги/мин" label="Средний каденс" extra="Макс. 88" />
                <Stat icon={<RunningIndexIcon />} iconClass="pt-0.5" value="48" label="Running Index" />
                <div>
                  <div className="flex items-center gap-px pt-0.5">
                    {[0, 1, 2, 3, 4].map((i) => (
                      <span key={i} className={`size-[13px] rounded-[2px] ${i < 2 ? 'bg-linear-to-b from-[#f3222a] to-[#d01820]' : 'bg-[#666]'}`} />
                    ))}
                    <span className="ml-1 leading-4">Разумная</span>
                  </div>
                  <p className="pt-0.5 leading-4 text-[#808080]">Тренировочная нагрузка</p>
                  <p className="leading-[14px]">Нагрузка от этой тренировки 10 часов</p>
                </div>
                <Stat icon={<SlopeIcon />} iconClass="pt-1.5" value="20 m" label="Подъем" />
                <Stat icon={<SlopeIcon down />} iconClass="pt-1.5" value="30 m" label="Спуск" />
                <Stat icon={<FlameIcon />} iconClass="pt-0.5" value="627 кКал" label="Калории" />
                <Stat icon={<FlameIcon striped />} iconClass="pt-[10px] pl-1" value="32 %" label="Процент калорий за счет жира" />
              </div>
              <button type="submit" className="-mb-5 h-[30px] w-[92px] self-end rounded-[3px] bg-[#63c8ef] text-white">
                Сохранить
              </button>
            </div>
          </div>
        </form>

        <section className="relative mt-5 min-h-[295px] flex-1 overflow-hidden">
          <RouteMap />
          <div className="absolute top-4 left-5 flex h-[60px] w-[30px] flex-col items-center rounded-[3px] bg-white shadow-[0_2px_3px_rgba(0,0,0,0.15)]">
            <button type="button" aria-label="Приблизить" className="flex w-full flex-1 items-center justify-center">
              <svg viewBox="0 0 14 14" className="size-3.5"><path d="M7 0V14M0 7H14" stroke="#222" strokeWidth="4" /></svg>
            </button>
            <span className="h-px w-[15px] bg-[#ccc]" />
            <button type="button" aria-label="Отдалить" className="flex w-full flex-1 items-center justify-center">
              <svg viewBox="0 0 14 4" className="h-1 w-3.5"><path d="M0 2H14" stroke="#222" strokeWidth="4" /></svg>
            </button>
          </div>
          <div className="absolute top-[15px] right-5 flex flex-col gap-[10px]">
            <button type="button" aria-label="Настройки" className={mapButton}><GearIcon /></button>
            <button type="button" aria-label="На весь экран" className={mapButton}><ExpandIcon /></button>
          </div>
          <button type="button" aria-label="Избранное" className={`${mapButton} absolute right-5 bottom-[30px]`}>
            <StarIcon />
          </button>
          <div className="absolute bottom-0 left-[5px] h-[17px] w-[68px] border-2 border-t-0 border-[#777] bg-white/50 pl-1 text-[11px] leading-4 text-[#333]">
            200 m
          </div>
          <div className="absolute right-0 -bottom-[5px] bg-white/60 px-[5px] text-[11px] leading-4 whitespace-nowrap text-[#0078a8]">
            <a href="#mapbox">© 2020 Mapbox</a> <a href="#osm"><span className="text-[#333]">©</span> OpenStreetMap</a>{' '}
            <a href="#improve" className="font-bold">Improve this map</a>
          </div>
        </section>
      </main>
    </div>
  )
}
